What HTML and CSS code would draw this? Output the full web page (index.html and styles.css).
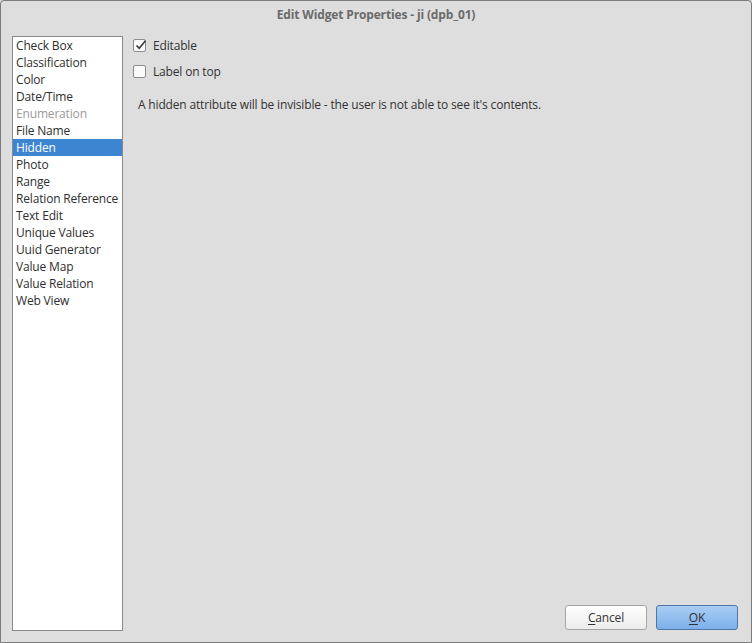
FILE: index.html
```html
<!DOCTYPE html>
<html>
<head>
<meta charset="utf-8">
<link rel="stylesheet" href="styles.css">
</head>
<body>
<div class="window">
  <div class="titlebar">Edit Widget Properties - ji (dpb_01)</div>
  <div class="content">
    <ul class="list">
      <li>Check Box</li>
      <li>Classification</li>
      <li>Color</li>
      <li>Date/Time</li>
      <li class="disabled">Enumeration</li>
      <li>File Name</li>
      <li class="selected">Hidden</li>
      <li>Photo</li>
      <li>Range</li>
      <li>Relation Reference</li>
      <li>Text Edit</li>
      <li>Unique Values</li>
      <li>Uuid Generator</li>
      <li>Value Map</li>
      <li>Value Relation</li>
      <li>Web View</li>
    </ul>
    <div class="pane">
      <label class="check"><span class="box checked"><svg viewBox="0 0 13 13" width="13" height="13"><path d="M2.5 6.5 L5.2 9.3 L11.5 1.8" fill="none" stroke="#3a3a3a" stroke-width="1.6"/></svg></span>Editable</label>
      <label class="check"><span class="box"></span>Label on top</label>
      <p class="desc">A hidden attribute will be invisible - the user is not able to see it's contents.</p>
      <div class="buttons">
        <button class="btn"><u>C</u>ancel</button>
        <button class="btn primary"><u>O</u>K</button>
      </div>
    </div>
  </div>
</div>
</body>
</html>
```

FILE: styles.css
```css
* { box-sizing: border-box; }
html, body { margin: 0; padding: 0; }
body {
  width: 752px;
  height: 643px;
  background: #dedede;
  font-family: "Open Sans", "DejaVu Sans", sans-serif;
  font-size: 12px;
  letter-spacing: -0.17px;
  color: #333;
  overflow: hidden;
}
.window {
  width: 752px;
  height: 643px;
  border: 1px solid #7b7b7b;
  border-radius: 4px 4px 0 0;
  background: #dedede;
  display: flex;
  flex-direction: column;
}
.titlebar {
  height: 29px;
  line-height: 28px;
  text-align: center;
  font-weight: bold;
  color: #6a6a6a;
  font-size: 12px;
  letter-spacing: -0.15px;
  flex: none;
}
.content {
  flex: 1;
  display: flex;
  padding: 6px 13px 11px 11px;
  gap: 10px;
}
.list {
  list-style: none;
  margin: 0;
  padding: 0;
  width: 111px;
  flex: none;
  background: #fff;
  border: 1px solid #8a8a8a;
}
.list li {
  height: 17px;
  line-height: 17px;
  padding-left: 3px;
  white-space: nowrap;
  color: #2e2e2e;
}
.list li.disabled { color: #9a9a9a; }
.list li.selected { background: #3d84d1; color: #fff; }
.pane {
  flex: 1;
  display: flex;
  flex-direction: column;
}
.check {
  display: flex;
  align-items: center;
  height: 17px;
  margin-top: 1px;
  margin-bottom: 8px;
  color: #333;
}
.box {
  width: 13px;
  height: 13px;
  border: 1px solid #8c8c8c;
  border-radius: 2px;
  background: #fafafa;
  margin-right: 7px;
  display: flex;
  align-items: center;
  justify-content: center;
  position: relative;
}
.box svg { position: absolute; left: 0; top: -1px; }
.desc {
  margin: 8px 0 0 5px;
  color: #333;
}
.buttons {
  margin-top: auto;
  display: flex;
  justify-content: flex-end;
  gap: 9px;
  padding-bottom: 1px;
}
.btn {
  width: 82px;
  height: 25px;
  font-family: inherit;
  font-size: 12px;
  letter-spacing: -0.17px;
  color: #333;
  border: 1px solid #a5a5a5;
  border-radius: 3px;
  background: linear-gradient(#ffffff, #ececec);
  padding: 0;
}
.btn u { text-decoration-thickness: 1px; text-underline-offset: 2px; }
.btn.primary {
  border-color: #4f76a6;
  background: linear-gradient(#a9cdf3, #7cb0ea);
}
```
